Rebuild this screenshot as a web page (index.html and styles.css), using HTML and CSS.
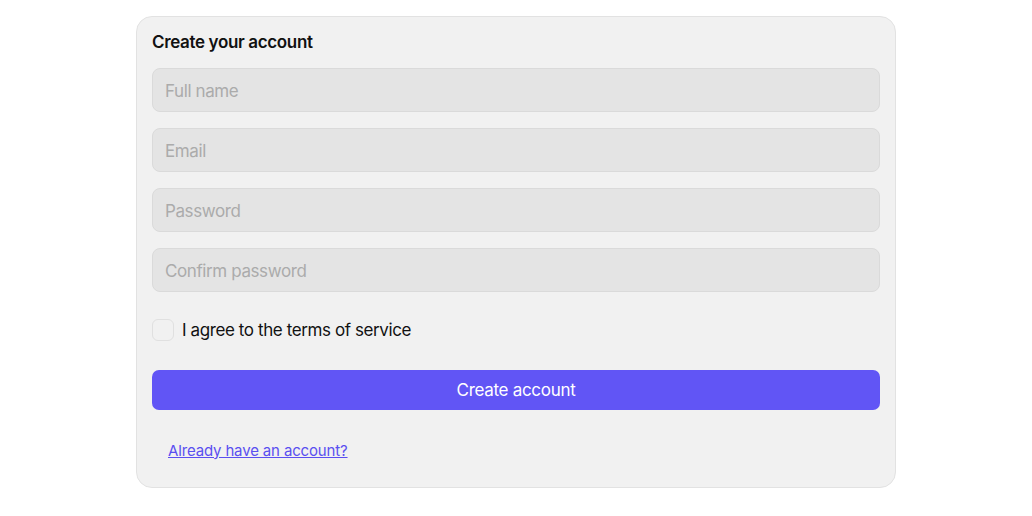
FILE: index.html
```html
<!DOCTYPE html>
<html lang="en">
<head>
    <meta charset="UTF-8">
    <meta name="viewport" content="width=device-width, initial-scale=1.0">
    <title>Create your account</title>
    <link rel="stylesheet" href="styles.css">
</head>
<body>
    <form class="card">
        <h1>Create your account</h1>
        <input class="field" type="text" placeholder="Full name">
        <input class="field" type="email" placeholder="Email">
        <input class="field" type="password" placeholder="Password">
        <input class="field" type="password" placeholder="Confirm password">

        <!-- Terms -->
        <label class="terms">
            <input type="checkbox">
            <span class="box"></span>
            I agree to the terms of service
        </label>

        <div class="actions">
            <button type="submit">Create account</button>
        </div>

        <div class="footer">
            <a href="#">Already have an account?</a>
        </div>
    </form>
</body>
</html>
```

FILE: styles.css
```css
body {
    margin: 0;
    padding: 16px 0;
    background: #fff;
    font-family: Inter, "Noto Sans", sans-serif;
    color: #111;
}

.card {
    width: 728px;
    margin: 0 auto;
    padding: 15px 15px 15px;
    background: #f1f1f1;
    border: 1px solid #e2e2e2;
    border-radius: 16px;
    display: flex;
    flex-direction: column;
    gap: 16px;
}

h1 {
    margin: 0;
    font-size: 17px;
    line-height: 20px;
    font-weight: 600;
    letter-spacing: -0.35px;
}

.field {
    height: 44px;
    box-sizing: border-box;
    padding: 1px 12px 0;
    background: #e4e4e4;
    border: 1px solid #dadada;
    border-radius: 8px;
    font-family: inherit;
    font-size: 17px;
    letter-spacing: -0.4px;
    color: #111;
    outline: none;
}

.field::placeholder {
    color: #ababab;
}

.terms {
    height: 44px;
    display: flex;
    align-items: center;
    gap: 8px;
    font-size: 17px;
    letter-spacing: -0.4px;
}

.terms input {
    display: none;
}

.terms .box {
    width: 20px;
    height: 20px;
    border: 1px solid #e0e0e0;
    border-radius: 6px;
    background: #f1f1f1;
}

.actions {
    height: 44px;
    display: flex;
    align-items: center;
}

button {
    width: 100%;
    height: 40px;
    background: #6155f5;
    color: #fff;
    border: none;
    border-radius: 7px;
    font-family: inherit;
    font-size: 17px;
    letter-spacing: -0.3px;
    cursor: pointer;
}

.footer {
    height: 44px;
    display: flex;
    align-items: center;
    padding-left: 16px;
}

.footer a {
    color: #5a4ff0;
    font-size: 15px;
    letter-spacing: -0.15px;
}
```
